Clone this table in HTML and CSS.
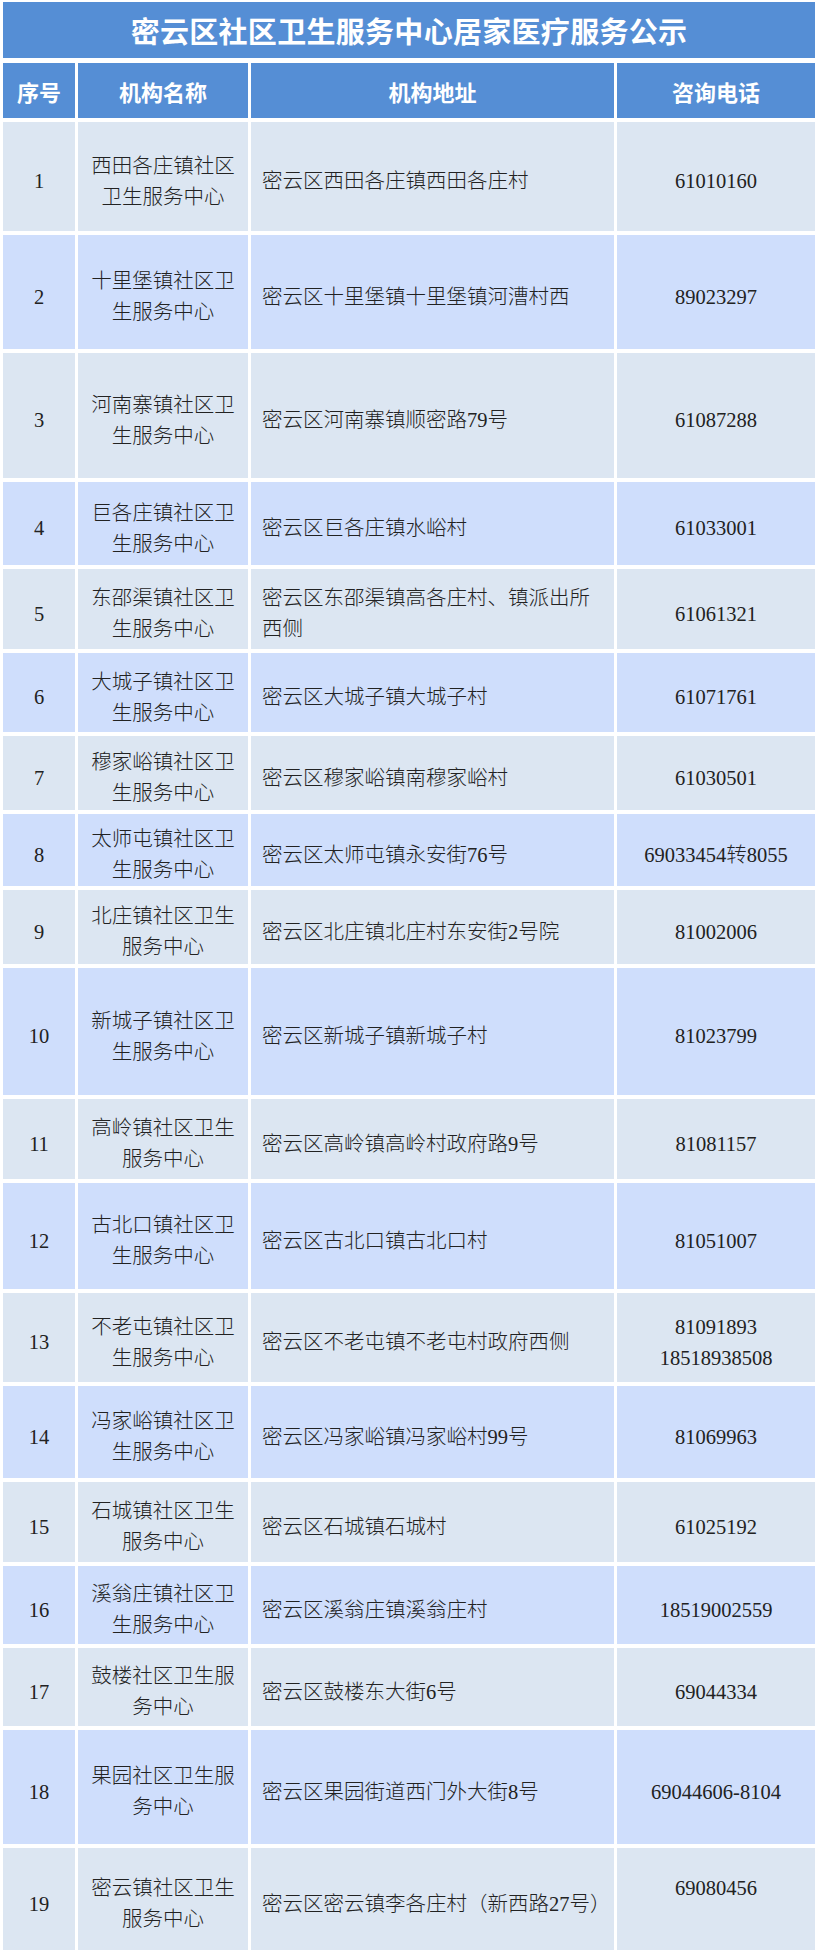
FILE: index.html
```html
<!DOCTYPE html>
<html lang="zh-CN">
<head>
<meta charset="utf-8">
<title>密云区社区卫生服务中心居家医疗服务公示</title>
<link rel="stylesheet" href="styles.css">
</head>
<body>
<div class="page">
  <div class="title">密云区社区卫生服务中心居家医疗服务公示</div>
  <table class="grid">
    <colgroup>
      <col class="c-no"><col class="c-name"><col class="c-addr"><col class="c-tel">
    </colgroup>
    <thead>
      <tr><th>序号</th><th>机构名称</th><th>机构地址</th><th>咨询电话</th></tr>
    </thead>
    <tbody>
      <tr><td class="no">1</td><td class="name">西田各庄镇社区<br>卫生服务中心</td><td class="addr">密云区西田各庄镇西田各庄村</td><td class="tel">61010160</td></tr>
      <tr><td class="no">2</td><td class="name">十里堡镇社区卫<br>生服务中心</td><td class="addr">密云区十里堡镇十里堡镇河漕村西</td><td class="tel">89023297</td></tr>
      <tr><td class="no">3</td><td class="name">河南寨镇社区卫<br>生服务中心</td><td class="addr">密云区河南寨镇顺密路79号</td><td class="tel">61087288</td></tr>
      <tr><td class="no">4</td><td class="name">巨各庄镇社区卫<br>生服务中心</td><td class="addr">密云区巨各庄镇水峪村</td><td class="tel">61033001</td></tr>
      <tr><td class="no">5</td><td class="name">东邵渠镇社区卫<br>生服务中心</td><td class="addr">密云区东邵渠镇高各庄村、镇派出所<br>西侧</td><td class="tel">61061321</td></tr>
      <tr><td class="no">6</td><td class="name">大城子镇社区卫<br>生服务中心</td><td class="addr">密云区大城子镇大城子村</td><td class="tel">61071761</td></tr>
      <tr><td class="no">7</td><td class="name">穆家峪镇社区卫<br>生服务中心</td><td class="addr">密云区穆家峪镇南穆家峪村</td><td class="tel">61030501</td></tr>
      <tr><td class="no">8</td><td class="name">太师屯镇社区卫<br>生服务中心</td><td class="addr">密云区太师屯镇永安街76号</td><td class="tel">69033454转8055</td></tr>
      <tr><td class="no">9</td><td class="name">北庄镇社区卫生<br>服务中心</td><td class="addr">密云区北庄镇北庄村东安街2号院</td><td class="tel">81002006</td></tr>
      <tr><td class="no">10</td><td class="name">新城子镇社区卫<br>生服务中心</td><td class="addr">密云区新城子镇新城子村</td><td class="tel">81023799</td></tr>
      <tr><td class="no">11</td><td class="name">高岭镇社区卫生<br>服务中心</td><td class="addr">密云区高岭镇高岭村政府路9号</td><td class="tel">81081157</td></tr>
      <tr><td class="no">12</td><td class="name">古北口镇社区卫<br>生服务中心</td><td class="addr">密云区古北口镇古北口村</td><td class="tel">81051007</td></tr>
      <tr><td class="no">13</td><td class="name">不老屯镇社区卫<br>生服务中心</td><td class="addr">密云区不老屯镇不老屯村政府西侧</td><td class="tel">81091893<br>18518938508</td></tr>
      <tr><td class="no">14</td><td class="name">冯家峪镇社区卫<br>生服务中心</td><td class="addr">密云区冯家峪镇冯家峪村99号</td><td class="tel">81069963</td></tr>
      <tr><td class="no">15</td><td class="name">石城镇社区卫生<br>服务中心</td><td class="addr">密云区石城镇石城村</td><td class="tel">61025192</td></tr>
      <tr><td class="no">16</td><td class="name">溪翁庄镇社区卫<br>生服务中心</td><td class="addr">密云区溪翁庄镇溪翁庄村</td><td class="tel">18519002559</td></tr>
      <tr><td class="no">17</td><td class="name">鼓楼社区卫生服<br>务中心</td><td class="addr">密云区鼓楼东大街6号</td><td class="tel">69044334</td></tr>
      <tr><td class="no">18</td><td class="name">果园社区卫生服<br>务中心</td><td class="addr">密云区果园街道西门外大街8号</td><td class="tel">69044606-8104</td></tr>
      <tr><td class="no">19</td><td class="name">密云镇社区卫生<br>服务中心</td><td class="addr">密云区密云镇李各庄村（新西路27号）</td><td class="tel raised">69080456</td></tr>
    </tbody>
  </table>
</div>
</body>
</html>
```

FILE: styles.css
```css
html, body {
  margin: 0;
  padding: 0;
  background: #ffffff;
}

.page {
  width: 822px;
  height: 1957px;
  overflow: hidden;
}

.title {
  margin: 2px 7px 1px 3px;
  height: 56px;
  background: #558ed5;
  color: #ffffff;
  font-family: "Noto Sans CJK SC", sans-serif;
  font-weight: 700;
  font-size: 29px;
  line-height: 56px;
  text-align: center;
  letter-spacing: 0.3px;
}

.grid {
  border-collapse: separate;
  border-spacing: 3px 4px;
  table-layout: fixed;
  width: 818px;
  margin: 0;
}

.c-no { width: 72px; }
.c-name { width: 170px; }
.c-addr { width: 363px; }
.c-tel { width: 198px; }

.grid th {
  height: 55px;
  padding: 0;
  background: #558ed5;
  color: #ffffff;
  font-family: "Noto Sans CJK SC", sans-serif;
  font-weight: 700;
  font-size: 22px;
  line-height: 30px;
  text-align: center;
  vertical-align: middle;
}

.grid td {
  padding: 10px 0 0 0;
  font-family: "Liberation Serif", "Noto Sans CJK SC", serif;
  font-weight: 300;
  font-size: 20.5px;
  line-height: 31px;
  color: #222222;
  vertical-align: middle;
  white-space: nowrap;
  overflow: visible;
}

.grid tbody tr:nth-child(odd) td { background: #dce6f2; }
.grid tbody tr:nth-child(even) td { background: #cfdefc; }

.no { text-align: center; }
.name { text-align: center; }
.grid td.addr { text-align: left; padding-left: 11px; }
.tel { text-align: center; }
.grid td.raised { padding-bottom: 31px; }

.grid tbody tr:nth-child(1) { height: 109px; }
.grid tbody tr:nth-child(2) { height: 114px; }
.grid tbody tr:nth-child(3) { height: 125px; }
.grid tbody tr:nth-child(4) { height: 83px; }
.grid tbody tr:nth-child(5) { height: 80px; }
.grid tbody tr:nth-child(6) { height: 79px; }
.grid tbody tr:nth-child(7) { height: 74px; }
.grid tbody tr:nth-child(8) { height: 72px; }
.grid tbody tr:nth-child(9) { height: 74px; }
.grid tbody tr:nth-child(10) { height: 127px; }
.grid tbody tr:nth-child(11) { height: 80px; }
.grid tbody tr:nth-child(12) { height: 106px; }
.grid tbody tr:nth-child(13) { height: 89px; }
.grid tbody tr:nth-child(14) { height: 92px; }
.grid tbody tr:nth-child(15) { height: 80px; }
.grid tbody tr:nth-child(16) { height: 78px; }
.grid tbody tr:nth-child(17) { height: 78px; }
.grid tbody tr:nth-child(18) { height: 114px; }
.grid tbody tr:nth-child(19) { height: 102px; }
```
